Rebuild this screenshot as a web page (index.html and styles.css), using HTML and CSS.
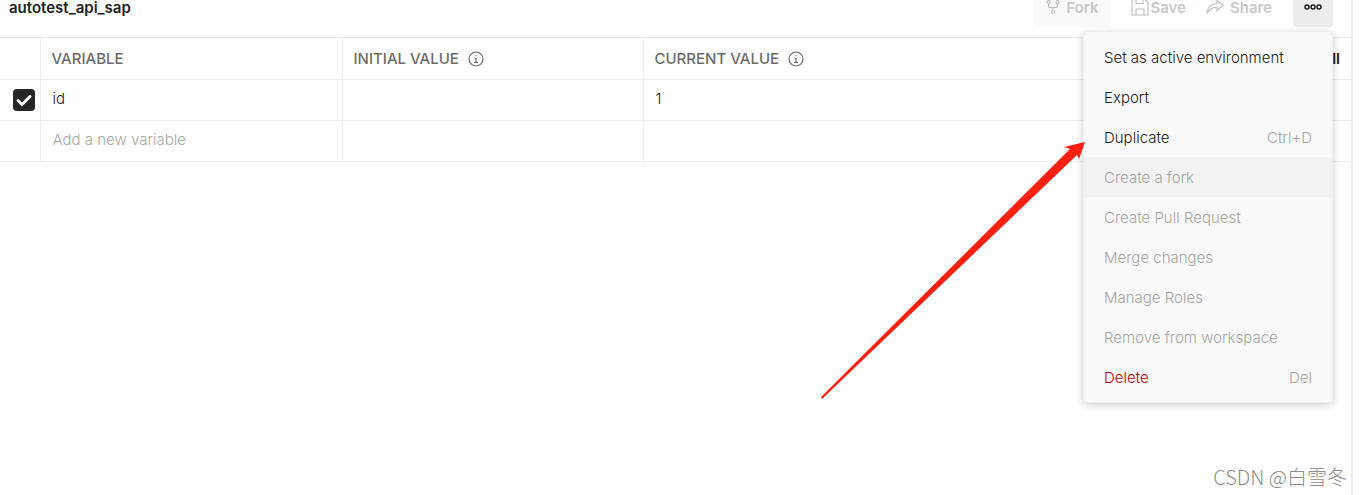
FILE: index.html
```html
<!DOCTYPE html>
<html lang="en">
<head>
    <meta charset="UTF-8">
    <meta name="viewport" content="width=device-width, initial-scale=1.0">
    <title>autotest_api_sap</title>
    <link rel="stylesheet" href="styles.css">
</head>
<body>
    <main class="workspace">
        <header class="toolbar">
            <h1 class="title">autotest_api_sap</h1>
            <div class="actions">
                <button class="btn btn-fork" disabled>
                    <svg class="icon" width="14" height="16" viewBox="0 0 14 16">
                        <circle cx="2.5" cy="3" r="1.5"/>
                        <circle cx="11.5" cy="3" r="1.5"/>
                        <circle cx="7" cy="13" r="1.5"/>
                        <path d="M2.500 4.500V6.500q0 2 2 2h5q2 0 2-2v-2M7 8.500v3"/>
                    </svg>
                    Fork
                </button>
                <button class="btn btn-save" disabled>
                    <svg class="icon" width="18" height="18" viewBox="0 0 18 18">
                        <path d="M1 .5h12l4 4v12.500H1zM5 .5v5h7v-5M5 17v-6h8v6"/>
                    </svg>
                    Save
                </button>
                <button class="btn btn-share" disabled>
                    <svg class="icon" width="18" height="16" viewBox="0 0 18 16">
                        <path d="M11 1.500l6 5-6 5V8.500Q4.500 8 1 14.500 1.500 5 11 4.500z"/>
                    </svg>
                    Share
                </button>
                <div class="more">
                    <button class="btn btn-more" aria-label="More actions">
                        <svg class="dots" width="18" height="6" viewBox="0 0 18 6">
                            <circle cx="3" cy="3" r="2"/>
                            <circle cx="9" cy="3" r="2"/>
                            <circle cx="15" cy="3" r="2"/>
                        </svg>
                    </button>
                    <div class="menu">
                        <button class="menu-item">Set as active environment</button>
                        <button class="menu-item">Export</button>
                        <button class="menu-item">Duplicate <span class="shortcut">Ctrl+D</span></button>
                        <button class="menu-item active" disabled>Create a fork</button>
                        <button class="menu-item" disabled>Create Pull Request</button>
                        <button class="menu-item" disabled>Merge changes</button>
                        <button class="menu-item" disabled>Manage Roles</button>
                        <button class="menu-item" disabled>Remove from workspace</button>
                        <button class="menu-item danger">Delete <span class="shortcut">Del</span></button>
                    </div>
                </div>
            </div>
        </header>

        <table class="variables">
            <colgroup>
                <col class="col-check">
                <col class="col-name">
                <col class="col-value">
                <col>
            </colgroup>
            <thead>
                <tr>
                    <th></th>
                    <th>VARIABLE</th>
                    <th>
                        <div class="head">
                            INITIAL VALUE
                            <svg class="info" width="16" height="16" viewBox="0 0 16 16">
                                <circle cx="8" cy="8" r="7"/>
                                <path d="M6.500 7.500H8v4M6 11.500h4M7.500 4.500h1"/>
                            </svg>
                        </div>
                    </th>
                    <th>
                        <div class="head">
                            CURRENT VALUE
                            <svg class="info" width="16" height="16" viewBox="0 0 16 16">
                                <circle cx="8" cy="8" r="7"/>
                                <path d="M6.500 7.500H8v4M6 11.500h4M7.500 4.500h1"/>
                            </svg>
                            <button class="all">All</button>
                        </div>
                    </th>
                </tr>
            </thead>
            <tbody>
                <tr>
                    <td>
                        <label class="check">
                            <input type="checkbox" aria-label="Enable id" checked>
                            <svg width="22" height="22" viewBox="0 0 22 22">
                                <path d="M5 11.500l4 4 8-8"/>
                            </svg>
                        </label>
                    </td>
                    <td><input class="field" type="text" aria-label="Variable" value="id"></td>
                    <td><input class="field" type="text" aria-label="Initial value"></td>
                    <td><input class="field" type="text" aria-label="Current value" value="1"></td>
                </tr>
                <tr>
                    <td></td>
                    <td><input class="field" type="text" aria-label="New variable" placeholder="Add a new variable"></td>
                    <td><input class="field" type="text" aria-label="New initial value"></td>
                    <td><input class="field" type="text" aria-label="New current value"></td>
                </tr>
            </tbody>
        </table>

        <svg class="arrow" width="264" height="258" viewBox="0 0 264 258">
            <path d="M0 256L249 8l-6-2 21-5-6 17-2-4L1 258z"/>
        </svg>
        <div class="watermark">CSDN @白雪冬</div>
    </main>
</body>
</html>
```

FILE: styles.css
```css
* {
    box-sizing: border-box;
}
body {
    margin: 0;
    background: #fff;
    color: #212121;
    font-family: Inter, "Liberation Sans", sans-serif;
    font-size: 15px;
    overflow: hidden;
}
button,
input {
    font: inherit;
    color: inherit;
}
button {
    border: 0;
    background: none;
}
.workspace {
    position: relative;
    min-height: 100vh;
    margin-right: 9px;
    border-right: 2px solid #ededed;
    display: flow-root;
}

/* toolbar */
.toolbar {
    display: flex;
    align-items: center;
    justify-content: space-between;
    height: 40px;
    margin: -13px 18px 10px 9px;
}
.title {
    margin: 0;
    font-size: 15px;
    font-weight: 600;
}
.actions {
    display: flex;
    align-items: center;
}
.btn {
    display: flex;
    align-items: center;
    height: 40px;
    padding: 0 12px;
    border-radius: 4px;
    font-weight: 600;
    color: #c8c8c8;
}
.btn-fork {
    gap: 6px;
    margin-right: 9px;
    background: #f9f9f9;
}
.btn-save {
    gap: 1px;
}
.btn-share {
    gap: 6px;
    padding: 0 8px;
    margin-right: 13px;
}
.icon {
    fill: none;
    stroke: #c0c0c0;
    stroke-width: 1.2;
}
.more {
    position: relative;
}
.btn-more {
    width: 40px;
    justify-content: center;
    padding: 0;
    background: #ededed;
}
.dots {
    fill: none;
    stroke: #212121;
    stroke-width: 1.5;
}

/* dropdown */
.menu {
    position: absolute;
    z-index: 2;
    top: 44px;
    right: 0;
    width: 250px;
    padding: 5px 0;
    background: #f9f9f9;
    border: 1px solid #ededed;
    border-radius: 4px;
    box-shadow: 0 2px 8px rgba(0, 0, 0, 0.2);
}
.menu-item {
    display: flex;
    align-items: center;
    justify-content: space-between;
    width: 100%;
    height: 40px;
    padding: 0 20px;
    font-weight: 300;
}
.menu-item:disabled,
.shortcut {
    color: #a6a6a6;
}
.menu-item.active {
    background: #f2f2f2;
}
.menu-item.danger {
    color: #b70000;
}

/* variables table */
.variables {
    width: 100%;
    table-layout: fixed;
    border-collapse: collapse;
}
.col-check {
    width: 40px;
}
.col-name {
    width: 302px;
}
.col-value {
    width: 301px;
}
.variables th,
.variables td {
    height: 41px;
    padding: 0;
    border: 1px solid #ededed;
}
.variables th:first-child,
.variables td:first-child {
    border-left: 0;
}
.variables th:last-child,
.variables td:last-child {
    border-right: 0;
}
.variables th {
    height: 42px;
    padding: 0 11px;
    text-align: left;
    font-weight: 500;
    color: #6b6b6b;
}
.head {
    display: flex;
    align-items: center;
    gap: 9px;
}
.info {
    fill: none;
    stroke: #6b6b6b;
    stroke-width: 1.2;
}
.all {
    margin-left: auto;
    padding: 0;
    font-weight: 600;
    color: #212121;
}
.field {
    display: block;
    width: 100%;
    height: 40px;
    padding: 0 12px 4px;
    border: 0;
    outline: 0;
    background: none;
    font-weight: 300;
}
.field::placeholder {
    color: #a6a6a6;
}
.check {
    display: grid;
    justify-content: end;
    padding-right: 5px;
}
.check input,
.check svg {
    grid-area: 1 / 1;
    width: 22px;
    height: 22px;
    margin: 0;
}
.check input {
    appearance: none;
    border-radius: 4px;
    background: #262626;
}
.check svg {
    z-index: 1;
    fill: none;
    stroke: #fff;
    stroke-width: 3;
    stroke-linecap: round;
    pointer-events: none;
}

.arrow {
    position: absolute;
    z-index: 3;
    top: 141px;
    right: 266px;
    fill: #ff2011;
    pointer-events: none;
}
.watermark {
    position: absolute;
    right: 4px;
    bottom: 4px;
    font-family: "Noto Sans CJK SC", sans-serif;
    font-size: 20px;
    font-weight: 300;
    line-height: 28px;
    color: #8c8c8c;
}
```
